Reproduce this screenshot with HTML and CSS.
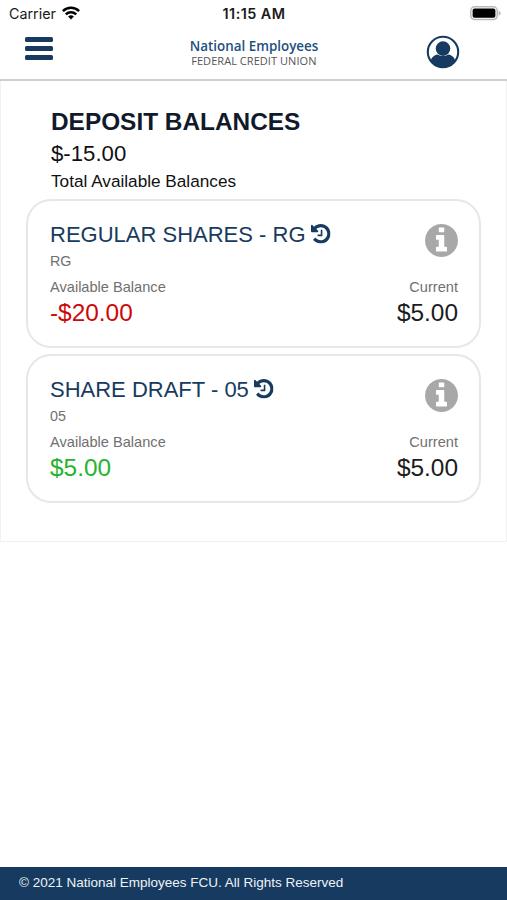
FILE: index.html
```html
<!DOCTYPE html>
<html lang="en">
<head>
<meta charset="utf-8">
<title>National Employees FCU</title>
<link rel="stylesheet" href="styles.css">
</head>
<body>
<svg class="defs" width="0" height="0" aria-hidden="true">
  <symbol id="history" viewBox="0 128 1536 1536"><path d="M1536 896q0 156-61 298t-164 245-245 164-298 61q-172 0-327-72.5t-264-204.5q-7-10-6.5-22.5t8.5-20.5l137-138q10-9 25-9 16 2 23 12 73 95 179 147t225 52q104 0 198.5-40.5t163.5-109.5 109.5-163.5 40.5-198.5-40.5-198.5-109.5-163.5-163.5-109.5-198.5-40.5q-98 0-188 35.5t-160 101.5l137 138q31 30 14 69-17 40-59 40h-448q-26 0-45-19t-19-45v-448q0-42 40-59 39-17 69 14l130 129q107-101 244.5-156.5t284.5-55.5q156 0 298 61t245 164 164 245 61 298zm-640-288v448q0 14-9 23t-23 9h-320q-14 0-23-9t-9-23v-64q0-14 9-23t23-9h224v-352q0-14 9-23t23-9h64q14 0 23 9t9 23z"/></symbol>
  <symbol id="info" viewBox="0 128 1536 1536"><path d="M1024 1376v-160q0-14-9-23t-23-9h-96v-512q0-14-9-23t-23-9h-320q-14 0-23 9t-9 23v160q0 14 9 23t23 9h96v320h-96q-14 0-23 9t-9 23v160q0 14 9 23t23 9h448q14 0 23-9t9-23zm-128-896v-160q0-14-9-23t-23-9h-192q-14 0-23 9t-9 23v160q0 14 9 23t23 9h192q14 0 23-9t9-23zm640 416q0 209-103 385.5t-279.5 279.5-385.5 103-385.5-103-279.5-279.5-103-385.5 103-385.5 279.5-279.5 385.5-103 385.5 103 279.5 279.5 103 385.5z"/></symbol>
</svg>
<div class="status">
  <div class="carrier"><span>Carrier</span>
    <svg class="wifi" viewBox="0 0 18 14"><g fill="none" stroke="#000" stroke-width="2.5"><path d="M.9 5.1a11.6 11.6 0 0 1 16.2 0"/><path d="M3.8 8.3a7.4 7.4 0 0 1 10.4 0"/></g><path d="M9 13.6l-2.9-3a4.2 4.2 0 0 1 5.8 0z"/></svg>
  </div>
  <div class="time">11:15 AM</div>
  <div class="power"><svg class="battery" viewBox="0 0 31 15"><rect x=".8" y=".8" width="26.4" height="12.8" rx="3.8" fill="#fff" stroke="#b9b9b9" stroke-width="1.5"/><rect x="2.6" y="2.6" width="22.8" height="9.2" rx="1.8"/><path d="M28.6 4.8q2 .8 2 2.4t-2 2.4z" fill="#b5b5b5"/></svg></div>
</div>
<header class="header">
  <div class="menu"><i></i><i></i><i></i></div>
  <div class="logo"><div class="logo-name">National Employees</div><div class="logo-sub">FEDERAL CREDIT UNION</div></div>
  <div class="account"><svg class="user" viewBox="0 0 34 34"><circle cx="17" cy="17" r="15.2" fill="#fff" stroke="#173b60" stroke-width="2.1"/><circle cx="17" cy="13.6" r="7.3"/><path d="M4.6 26.2C5.6 22 7.8 20.2 11.6 19.4Q17 22.6 22.4 19.4C26.2 20.2 28.4 22 29.4 26.2A15.4 15.4 0 0 1 4.6 26.2z"/></svg></div>
</header>
<main class="panel">
  <section class="summary">
    <h1>DEPOSIT BALANCES</h1>
    <div class="total">$-15.00</div>
    <div class="total-label">Total Available Balances</div>
  </section>
  <article class="card">
    <div class="card-top">
      <div><h2><span>REGULAR SHARES - RG</span><svg class="history"><use href="#history"/></svg></h2><div class="code">RG</div></div>
      <svg class="info"><use href="#info"/></svg>
    </div>
    <div class="balances">
      <div><div class="label">Available Balance</div><div class="amount negative">-$20.00</div></div>
      <div class="current"><div class="label">Current</div><div class="amount">$5.00</div></div>
    </div>
  </article>
  <article class="card">
    <div class="card-top">
      <div><h2><span>SHARE DRAFT - 05</span><svg class="history"><use href="#history"/></svg></h2><div class="code">05</div></div>
      <svg class="info"><use href="#info"/></svg>
    </div>
    <div class="balances">
      <div><div class="label">Available Balance</div><div class="amount positive">$5.00</div></div>
      <div class="current"><div class="label">Current</div><div class="amount">$5.00</div></div>
    </div>
  </article>
</main>
<footer class="footer">© 2021 National Employees FCU. All Rights Reserved</footer>
</body>
</html>
```
FILE: styles.css
```css
* { box-sizing: border-box; }
body {
  margin: 0;
  height: 900px;
  display: flex;
  flex-direction: column;
  background: #fff;
  font-family: "Liberation Sans", Arial, sans-serif;
  color: #111;
  white-space: nowrap;
  overflow: hidden;
}
svg { display: block; flex: none; }
.defs { position: absolute; }
.status {
  height: 28px;
  display: grid;
  grid-template-columns: 1fr auto 1fr;
  padding: 0 7px 0 9px;
  align-items: center;
  font: 14.3px/28px Inter, sans-serif;
  color: #1a1a1a;
}
.carrier { display: flex; align-items: center; gap: 6px; }
.wifi { width: 18px; height: 14px; margin-top: -2px; }
.time { font-weight: 600; font-size: 14.4px; letter-spacing: .45px; margin-left: -1px; }
.power { display: flex; justify-content: flex-end; }
.battery { width: 31px; height: 15px; margin: -2px -1px 0 0; }
.header {
  height: 53px;
  display: grid;
  grid-template-columns: 1fr auto 1fr;
  align-items: start;
  padding: 0 47px 0 25px;
  border-bottom: 2px solid #cfcfcf;
}
.menu { display: grid; gap: 4px; padding-top: 9px; width: 28px; }
.menu i { height: 5px; border-radius: 1.5px; background: #173b60; }
.logo { padding-top: 9px; font-family: "Open Sans", sans-serif; margin-left: 23px; }
.logo-name { font-size: 13.4px; line-height: 18px; font-weight: 600; color: #1d507f; }
.logo-sub { font-size: 11px; line-height: 11px; letter-spacing: .05px; color: #555; padding-left: 1.5px; }
.account { display: flex; justify-content: flex-end; padding-top: 7px; }
.user { width: 34px; height: 34px; fill: #173b60; }
.panel {
  height: 461px;
  border: solid #f1f1f1;
  border-width: 0 1px 1px;
  padding: 25px 25px 0;
}
.summary { padding-left: 25px; height: 93px; color: #111; }
h1 { margin: 0; font-size: 24.4px; line-height: 32px; color: #111a2b; }
.total { font-size: 22.2px; line-height: 32px; }
.total-label { font-size: 17.2px; line-height: 23px; }
.card {
  height: 149px;
  margin-bottom: 6px;
  padding: 21px 21px 0 22px;
  border: 2px solid #e7e7e7;
  border-radius: 25px;
}
.card-top { display: flex; justify-content: space-between; height: 56px; }
h2 { margin: 0; display: flex; align-items: center; gap: 6px; font-size: 22px; line-height: 26px; font-weight: 400; color: #173b60; }
.history { width: 19.5px; height: 19.5px; margin: -2px 0 0 -.5px; fill: #173b60; }
.code { font-size: 14.3px; line-height: 27px; color: #707070; }
.info { width: 33px; height: 33px; margin-top: 2px; fill: #a8a8a8; }
.balances { display: flex; justify-content: space-between; }
.current { text-align: right; }
.label { font-size: 14.6px; line-height: 18px; color: #707070; }
.amount { font-size: 24.4px; line-height: 34px; color: #1c1c1c; }
.negative { color: #cc0909; }
.positive { color: #27b32f; }
.footer {
  margin-top: auto;
  height: 33px;
  padding-left: 19px;
  background: #173b60;
  color: #eef3f7;
  font-size: 13.5px;
  line-height: 31px;
}
```
